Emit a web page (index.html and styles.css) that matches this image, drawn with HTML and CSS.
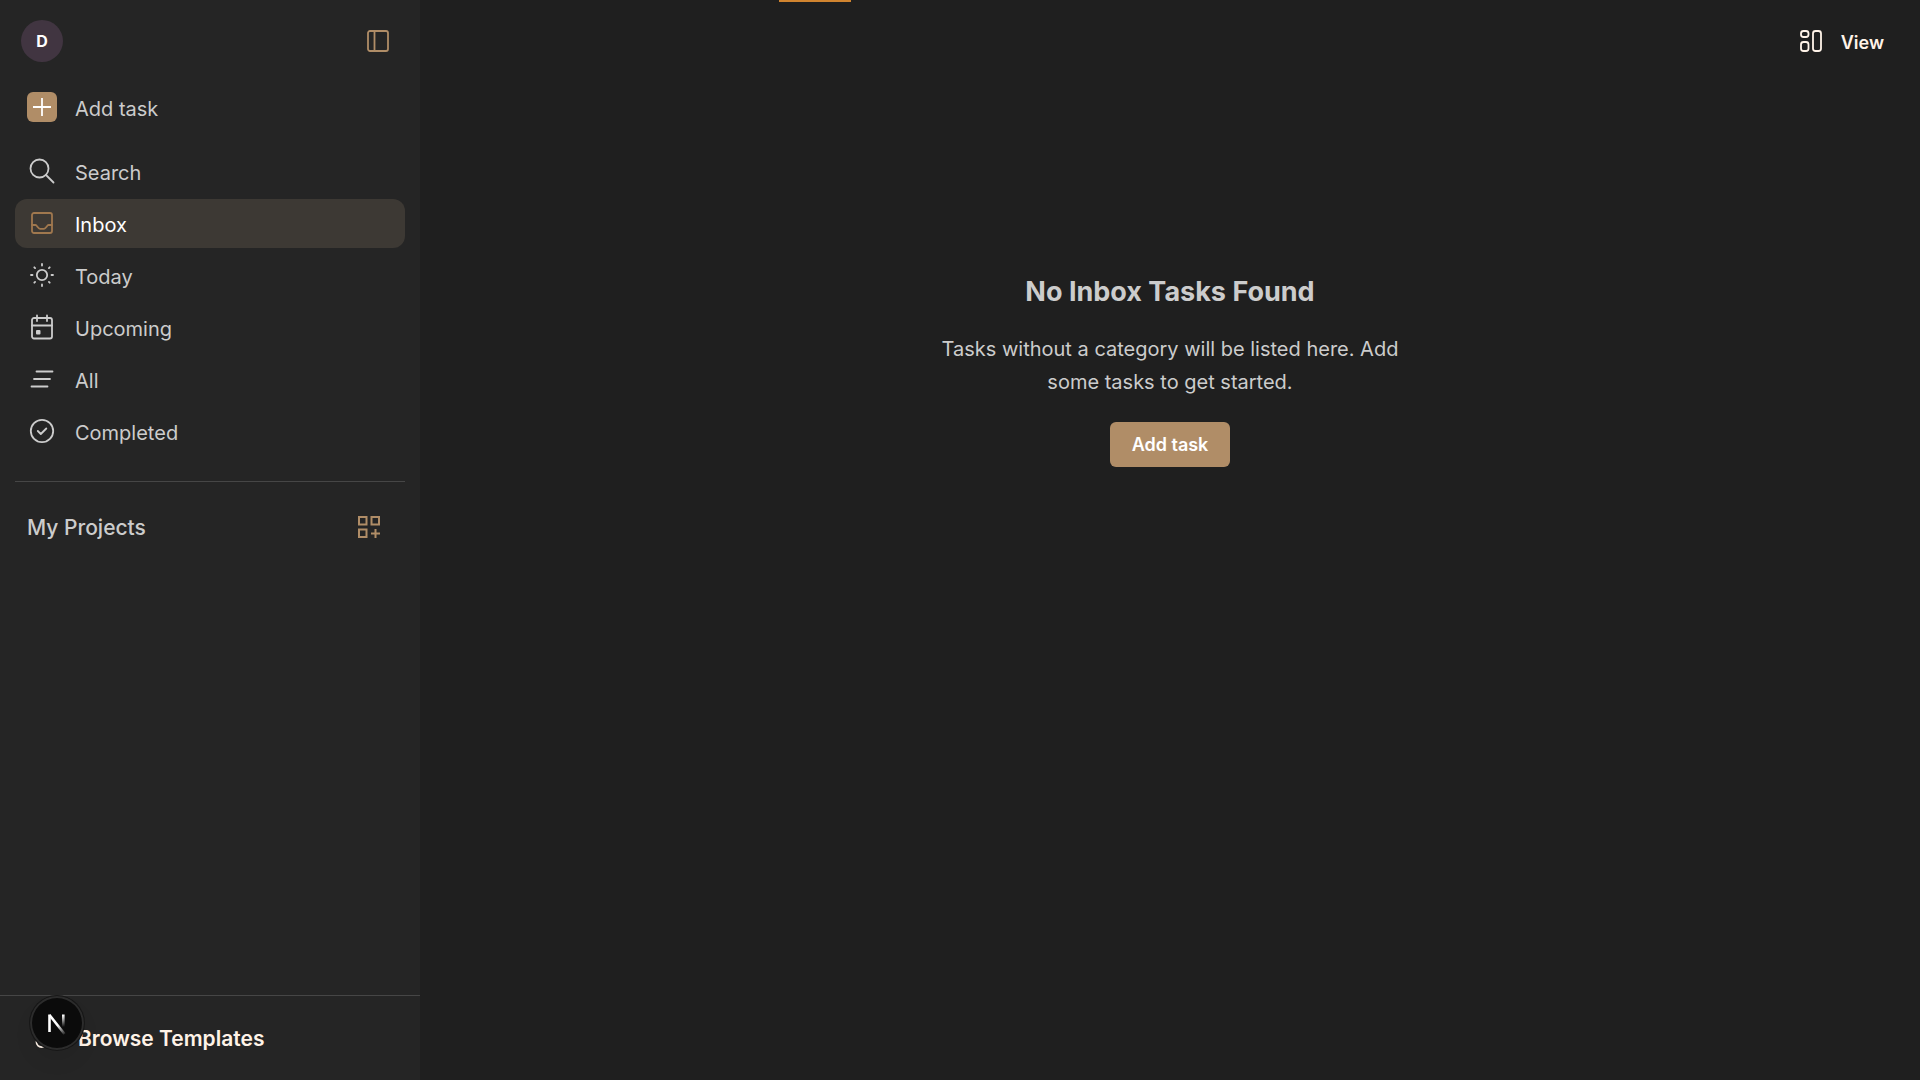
FILE: index.html
```html
<!DOCTYPE html>
<html lang="en">
<head>
  <meta charset="utf-8">
  <meta name="viewport" content="width=device-width, initial-scale=1">
  <title>Inbox</title>
  <link rel="stylesheet" href="styles.css">
</head>
<body>
  <div class="progress"></div>
  <div class="app">
    <aside class="sidebar">
      <header class="sidebar-header">
        <button class="avatar" type="button">D</button>
        <button class="icon-button" type="button" aria-label="Toggle sidebar">
          <svg class="icon" viewBox="0 0 30 30"><rect x="5" y="5" width="20" height="20" rx="2"/><path d="M11.500 5v20"/></svg>
        </button>
      </header>
      <button class="nav-item add-item" type="button">
        <svg class="icon plus" viewBox="0 0 30 30"><path d="M15 6v18M6 15h18"/></svg>
        <span>Add task</span>
      </button>
      <nav class="nav">
        <a class="nav-item" href="#search">
          <svg class="icon" viewBox="0 0 30 30"><circle cx="12.500" cy="12.500" r="9"/><path d="M19 19l7.500 7.500"/></svg>
          <span>Search</span>
        </a>
        <a class="nav-item active" href="#inbox">
          <svg class="icon" viewBox="0 0 30 30"><rect x="5" y="5" width="20" height="20" rx="2"/><path d="M5 17h3.500c1.500 0 2.500 3.800 4.500 3.800h4c2 0 3-3.800 4.500-3.800H25"/></svg>
          <span>Inbox</span>
        </a>
        <a class="nav-item" href="#today">
          <svg class="icon" viewBox="0 0 30 30"><circle cx="15" cy="15" r="5.200"/><path d="M15 4v1.500M15 24.500V26M4 15h1.500M24.500 15H26M7.300 7.300l.8.8M21.900 21.900l.8.8M7.300 22.700l.8-.8M21.900 8.100l.8-.8"/></svg>
          <span>Today</span>
        </a>
        <a class="nav-item" href="#upcoming">
          <svg class="icon" viewBox="0 0 30 30"><rect x="5" y="6" width="20" height="20.500" rx="2"/><path d="M5 13.500h20M10 3.500v5.500M20 3.500v5.500"/><rect class="dot" x="9" y="18" width="4.500" height="4.500" rx="1"/></svg>
          <span>Upcoming</span>
        </a>
        <a class="nav-item" href="#all">
          <svg class="icon" viewBox="0 0 30 30"><path d="M9.500 7.500h16M7 15h16M4.500 22.500h16"/></svg>
          <span>All</span>
        </a>
        <a class="nav-item" href="#completed">
          <svg class="icon" viewBox="0 0 30 30"><circle cx="15" cy="15" r="11.200"/><path d="M10.800 15l3 3 5.500-5.500"/></svg>
          <span>Completed</span>
        </a>
      </nav>
      <section class="projects">
        <h2 class="projects-title">My Projects</h2>
        <button class="icon-button" type="button" aria-label="Add project">
          <svg class="icon square" viewBox="0 0 30 30"><path d="M5 5h7.500v7.500H5zM17.500 5H25v7.500h-7.500zM5 17.500h7.500V25H5zM21.500 17v9M17 21.500h9"/></svg>
        </button>
      </section>
      <footer class="sidebar-footer">
        <a class="templates" href="#templates">
          <svg class="icon small" viewBox="0 0 24 24"><circle cx="8.500" cy="15" r="5"/><rect x="15" y="12" width="6" height="8" rx="2"/><rect x="4" y="3" width="8" height="4" rx="1"/><circle cx="18" cy="6" r="3"/></svg>
          <span>Browse Templates</span>
        </a>
      </footer>
    </aside>
    <main class="content">
      <header class="toolbar">
        <button class="view-button" type="button">
          <svg class="icon" viewBox="0 0 30 30"><rect x="5" y="5" width="7.500" height="6" rx="2.500"/><rect x="5" y="16" width="7.500" height="9" rx="2.500"/><rect x="17" y="5" width="8" height="20" rx="2.500"/></svg>
          <span>View</span>
        </button>
      </header>
      <section class="empty">
        <h1 class="empty-title">No Inbox Tasks Found</h1>
        <p class="empty-text">Tasks without a category will be listed here. Add some tasks to get started.</p>
        <button class="primary-button" type="button">Add task</button>
      </section>
    </main>
  </div>
  <button class="dev-badge" type="button" aria-label="Open developer tools">
    <svg viewBox="0 0 54 54">
      <defs>
        <linearGradient id="diagonal" x1="28" y1="29" x2="35" y2="38" gradientUnits="userSpaceOnUse"><stop stop-color="#fff"/><stop offset="1" stop-color="#fff" stop-opacity="0.100"/></linearGradient>
        <linearGradient id="stem" x1="0" y1="19" x2="0" y2="31" gradientUnits="userSpaceOnUse"><stop stop-color="#fff"/><stop offset="1" stop-color="#fff" stop-opacity="0"/></linearGradient>
      </defs>
      <path d="M19.500 36V18.500" stroke="#fff" stroke-width="2.600"/>
      <path d="M19.500 19L34.500 38" stroke="url(#diagonal)" stroke-width="2.600"/>
      <rect x="32" y="18.500" width="2.600" height="13" fill="url(#stem)"/>
    </svg>
  </button>
</body>
</html>
```
FILE: styles.css
```css
:root {
  --accent: #b08d67;
  --text: #cccccc;
  --cream: #fff3e8;
  --line: #464646;
}

* {
  box-sizing: border-box;
}

body {
  margin: 0;
  background: #1f1f1f;
  color: var(--text);
  font-family: Inter, "Liberation Sans", sans-serif;
  font-size: 20px;
}

button {
  border: 0;
  padding: 0;
  background: none;
  color: inherit;
  font: inherit;
  cursor: pointer;
}

a {
  color: inherit;
  text-decoration: none;
}

h1,
h2,
p {
  margin: 0;
}

.icon {
  display: block;
  flex: none;
  width: 30px;
  height: 30px;
  fill: none;
  stroke: currentColor;
  stroke-width: 1.8;
  stroke-linecap: round;
  stroke-linejoin: round;
}

.small {
  width: 24px;
  height: 24px;
}

.square {
  stroke-width: 2;
  stroke-linecap: butt;
  stroke-linejoin: miter;
}

.dot {
  fill: currentColor;
  stroke: none;
}

.progress {
  position: fixed;
  top: 0;
  left: 779px;
  width: 72px;
  height: 2px;
  background: #d0842f;
}

.app {
  display: flex;
  min-height: 100vh;
}

.sidebar {
  display: flex;
  flex-direction: column;
  flex: none;
  width: 420px;
  background: #252525;
}

.sidebar-header {
  display: flex;
  align-items: center;
  justify-content: space-between;
  padding: 20px 27px 21px 21px;
}

.avatar {
  width: 42px;
  height: 42px;
  border-radius: 50%;
  background: #413541;
  color: #ffffff;
  font-size: 16px;
  font-weight: 700;
}

.icon-button {
  color: var(--accent);
}

.nav {
  display: flex;
  flex-direction: column;
  gap: 3px;
  margin: 0 15px;
  padding: 15px 0 25px;
  border-bottom: 1px solid var(--line);
}

.nav-item {
  display: flex;
  align-items: flex-start;
  gap: 18px;
  height: 49px;
  padding: 9px 12px;
  border-radius: 12px;
  line-height: 30px;
}

.nav-item span {
  padding-top: 2px;
}

.add-item {
  margin: 0 15px;
}

.plus {
  border-radius: 6px;
  background: var(--accent);
  color: #ffffff;
  stroke-linecap: butt;
}

.active {
  background: #3d3934;
  color: #ffffff;
}

.active .icon {
  color: #a0784e;
}

.projects {
  display: flex;
  align-items: center;
  justify-content: space-between;
  padding: 30px 36px 30px 27px;
}

.projects-title {
  font-size: 21px;
  font-weight: 500;
}

.sidebar-footer {
  margin-top: auto;
  padding: 28px 33px 26px;
  border-top: 1px solid var(--line);
  color: var(--cream);
  font-size: 21px;
  font-weight: 600;
  line-height: 30px;
}

.templates {
  display: flex;
  align-items: center;
  gap: 21px;
}

.content {
  flex: 1;
  min-width: 0;
}

.toolbar {
  display: flex;
  justify-content: flex-end;
  padding: 26px 36px;
}

.view-button {
  display: flex;
  align-items: center;
  gap: 15px;
  color: var(--cream);
  font-size: 18px;
  font-weight: 600;
}

.view-button span {
  padding-top: 2px;
}

.empty {
  display: flex;
  flex-direction: column;
  align-items: center;
  padding: 192px 24px 24px;
  text-align: center;
}

.empty-title {
  font-size: 27px;
  font-weight: 700;
  line-height: 36px;
}

.empty-text {
  max-width: 500px;
  margin: 23px 0;
  line-height: 33px;
}

.primary-button {
  height: 45px;
  padding: 0 22px;
  border-radius: 6px;
  background: var(--accent);
  color: #ffffff;
  font-size: 18px;
  font-weight: 600;
}

.dev-badge {
  position: fixed;
  bottom: 30px;
  left: 30px;
  width: 54px;
  height: 54px;
  border-radius: 50%;
  background: #0b0b0b;
  box-shadow: 0 0 0 1px #171717, inset 0 0 0 2px #2c2c2c, 0 12px 24px -6px rgb(0 0 0 / 10%);
}

.dev-badge svg {
  display: block;
}
```
